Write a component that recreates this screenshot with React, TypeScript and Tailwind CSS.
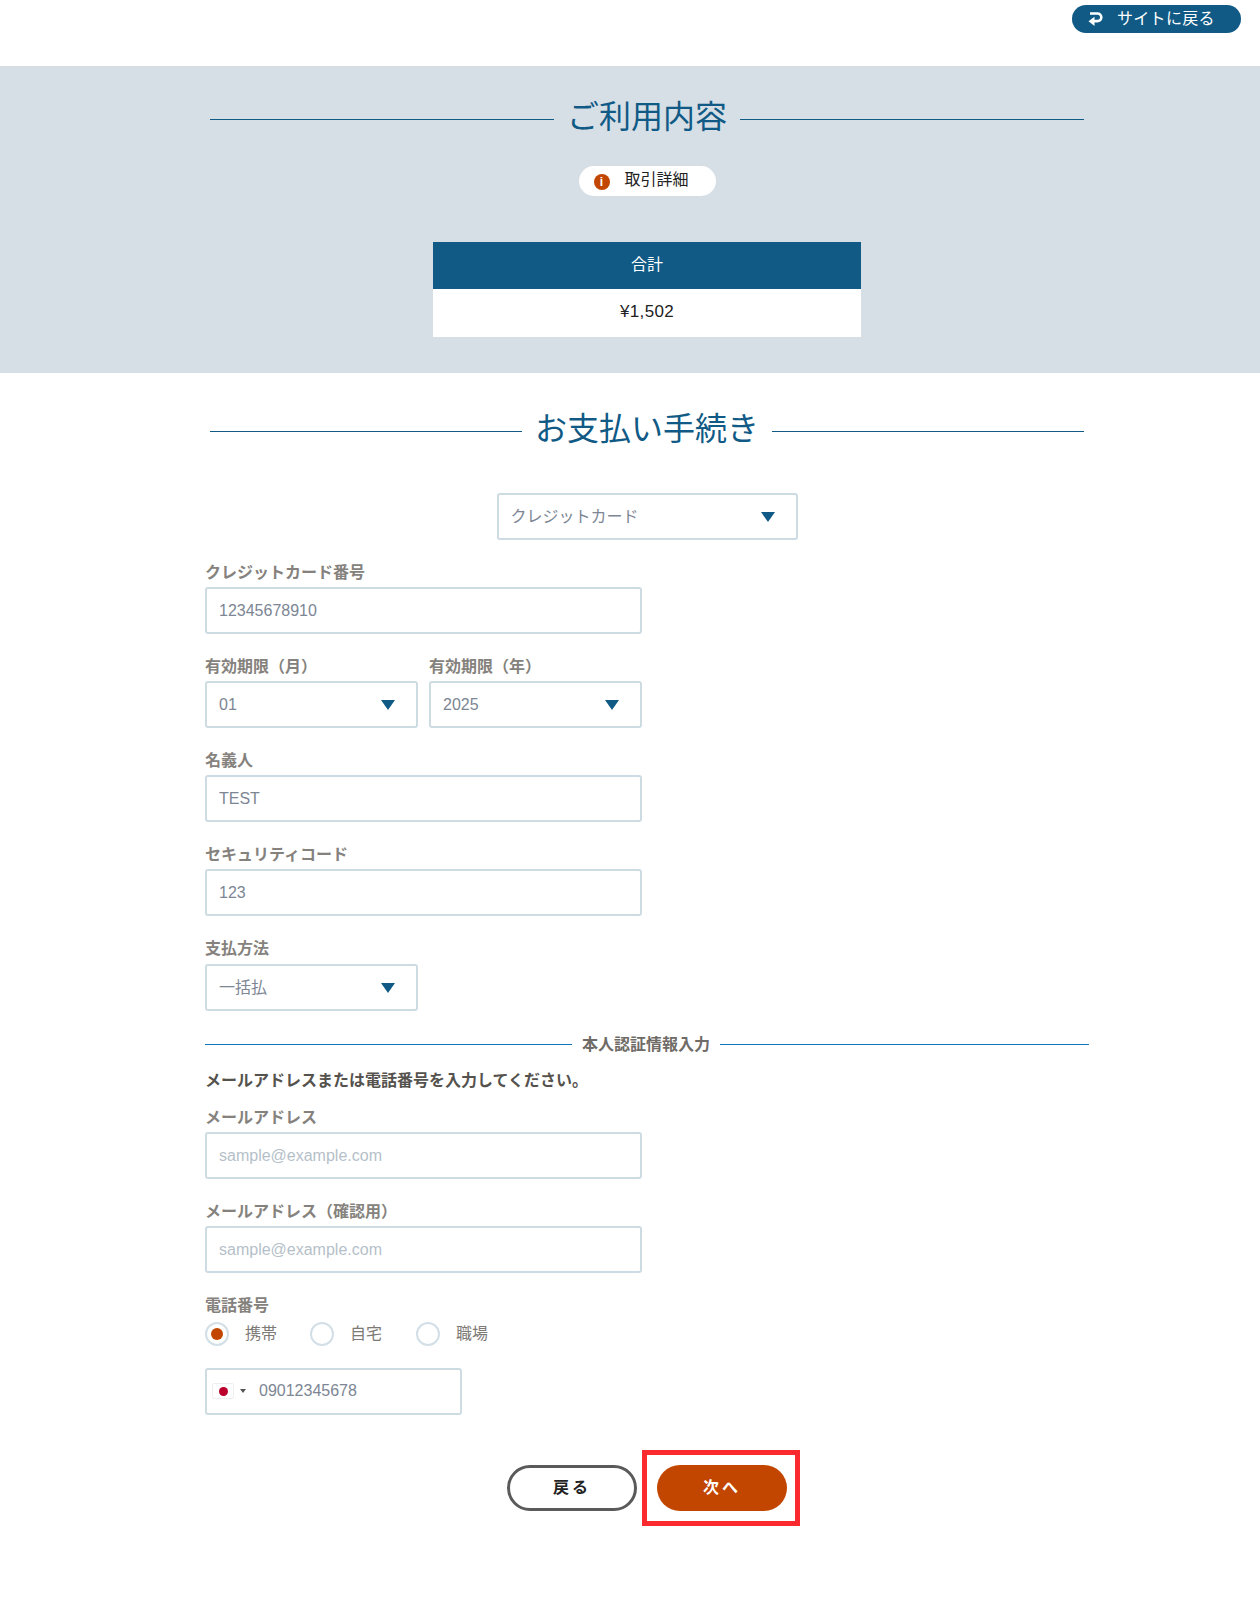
import React from 'react';

const font = "font-['Liberation_Sans','Noto_Sans_CJK_JP',sans-serif]";

function SectionTitle({ text }: { text: string }) {
  return (
    <div className="mx-auto flex w-[874px] items-center gap-[13px]">
      <div className="mt-[5px] h-px flex-1 bg-[#105a85]" />
      <h2 className="text-[32px] leading-[44px] font-normal text-[#105a85]">{text}</h2>
      <div className="mt-[5px] h-px flex-1 bg-[#105a85]" />
    </div>
  );
}

function Caret() {
  return <div className="h-0 w-0 border-x-[7px] border-t-[10px] border-x-transparent border-t-[#105a85]" />;
}

function Field({ label, children, gap = 'mb-[4px]' }: { label: string; children: React.ReactNode; gap?: string }) {
  return (
    <div className="flex flex-col">
      <label className={`${gap} text-[16px] leading-[21px] font-bold text-[#85827d]`}>{label}</label>
      {children}
    </div>
  );
}

function TextBox({ value, placeholder }: { value?: string; placeholder?: string }) {
  return (
    <input
      readOnly
      value={value}
      placeholder={placeholder}
      className="h-[47px] w-full rounded-[3px] border-2 border-[#cddbe3] px-[12px] text-[16px] text-[#7c8694] outline-none placeholder:text-[#b5bfc9]"
    />
  );
}

function SelectBox({ value, className }: { value: string; className?: string }) {
  return (
    <div className={`flex h-[47px] items-center justify-between rounded-[3px] border-2 border-[#cddbe3] pr-[21px] pl-[12px] text-[16px] text-[#7c8694] ${className ?? ''}`}>
      <span>{value}</span>
      <Caret />
    </div>
  );
}

function Radio({ label, checked }: { label: string; checked?: boolean }) {
  return (
    <div className="flex items-center gap-[16px]">
      <div className="flex h-[24px] w-[24px] items-center justify-center rounded-full border-2 border-[#d3dfe7]">
        {checked && <div className="h-[12px] w-[12px] rounded-full bg-[#c24600]" />}
      </div>
      <span className="text-[16px] text-[#7d7a76]">{label}</span>
    </div>
  );
}

export default function App() {
  return (
    <div className={`min-h-[1621px] bg-white ${font}`}>
      <div className="flex h-[66px] justify-end pt-[5px] pr-[19px]">
        <button className="flex h-[28px] w-[169px] items-center rounded-full bg-[#105a85] pb-[1px] pl-[15px] text-[16px] tracking-[0.3px] text-white">
          <svg width="16" height="16" viewBox="0 0 16 16" fill="none" stroke="white" strokeWidth="2.6" className="mr-[14px]">
            <path d="M3 2.5h7.5a3.8 3.8 0 0 1 0 7.6H5" />
            <path d="M7.5 5.8 1.5 10.2 7.5 15z" fill="white" stroke="none" />
          </svg>
          サイトに戻る
        </button>
      </div>

      <section className="h-[307px] bg-[#d7dfe6] pt-[29px] pl-[34px]">
        <SectionTitle text="ご利用内容" />
        <div className="mt-[27px] flex justify-center">
          <div className="flex h-[30px] w-[137px] items-center rounded-full bg-white pb-[2px] pl-[15px] text-[16px] text-[#222]">
            <div className="mt-[3px] mr-[15px] flex h-[16px] w-[16px] items-center justify-center rounded-full bg-[#c24600] text-[12px] leading-none font-bold text-white">i</div>
            取引詳細
          </div>
        </div>
        <div className="mx-auto mt-[46px] w-[428px]">
          <div className="flex h-[47px] items-center justify-center bg-[#105a85] pb-[2px] text-[16px] text-white">合計</div>
          <div className="flex h-[48px] items-center justify-center bg-white pb-[2px] text-[17px] tracking-[0.3px] text-[#222]">¥1,502</div>
        </div>
      </section>

      <section className="pt-[34px] pl-[34px]">
        <SectionTitle text="お支払い手続き" />

        <div className="mt-[42px] flex justify-center">
          <SelectBox value="クレジットカード" className="w-[301px]" />
        </div>

        <div className="mt-[22px] ml-[171px] flex w-[884px] flex-col">
          <div className="flex w-[437px] flex-col gap-[22px]">
            <Field label="クレジットカード番号">
              <TextBox value="12345678910" />
            </Field>
            <div className="flex gap-[11px]">
              <div className="flex-1">
                <Field label="有効期限（月）">
                  <SelectBox value="01" />
                </Field>
              </div>
              <div className="flex-1">
                <Field label="有効期限（年）">
                  <SelectBox value="2025" />
                </Field>
              </div>
            </div>
            <Field label="名義人">
              <TextBox value="TEST" />
            </Field>
            <Field label="セキュリティコード">
              <TextBox value="123" />
            </Field>
            <Field label="支払方法" gap="mb-[5px]">
              <SelectBox value="一括払" className="w-[213px]" />
            </Field>
          </div>

          <div className="mt-[23px] flex items-center gap-[10px]">
            <div className="h-px flex-1 bg-[#0f76bd]" />
            <span className="text-[16px] leading-[21px] font-bold text-[#6f6b66]">本人認証情報入力</span>
            <div className="h-px w-[369px] bg-[#0f76bd]" />
          </div>

          <p className="mt-[15px] text-[16px] leading-[22px] font-bold text-[#55524e]">メールアドレスまたは電話番号を入力してください。</p>

          <div className="mt-[15px] flex w-[437px] flex-col gap-[22px]">
            <Field label="メールアドレス">
              <TextBox placeholder="sample@example.com" />
            </Field>
            <Field label="メールアドレス（確認用）">
              <TextBox placeholder="sample@example.com" />
            </Field>
          </div>

          <div className="mt-[22px]">
            <label className="block text-[16px] leading-[21px] font-bold text-[#85827d]">電話番号</label>
            <div className="mt-[6px] flex gap-[33px]">
              <Radio label="携帯" checked />
              <Radio label="自宅" />
              <div className="ml-[1px]">
                <Radio label="職場" />
              </div>
            </div>
            <div className="mt-[22px] flex h-[47px] w-[257px] items-center rounded-[3px] border-2 border-[#cddbe3] pb-[1px] pl-[5px] text-[16px] text-[#7c8694]">
              <div className="flex h-[16px] w-[22px] items-center justify-center rounded-[2px] border border-[#eeeeee] bg-white">
                <div className="h-[9px] w-[9px] rounded-full bg-[#bc002d]" />
              </div>
              <div className="mr-[13px] ml-[6px] h-0 w-0 border-x-[3px] border-t-[4px] border-x-transparent border-t-[#555]" />
              09012345678
            </div>
          </div>
        </div>

        <div className="mt-[50px] flex items-center justify-center gap-[20px]">
          <button className="flex h-[46px] w-[130px] items-center justify-center rounded-full border-[3px] border-[#5a5a5a] bg-white text-[16px] font-bold tracking-[3px] text-[#222]">
            戻る
          </button>
          <div className="relative">
            <button className="flex h-[46px] w-[130px] items-center justify-center rounded-full bg-[#c24600] text-[16px] font-bold tracking-[3px] text-white">
              次へ
            </button>
            <div className="absolute -top-[15px] -right-[13px] -bottom-[15px] -left-[15px] border-[5px] border-[#fb2a2f]" />
          </div>
        </div>
      </section>
    </div>
  );
}
